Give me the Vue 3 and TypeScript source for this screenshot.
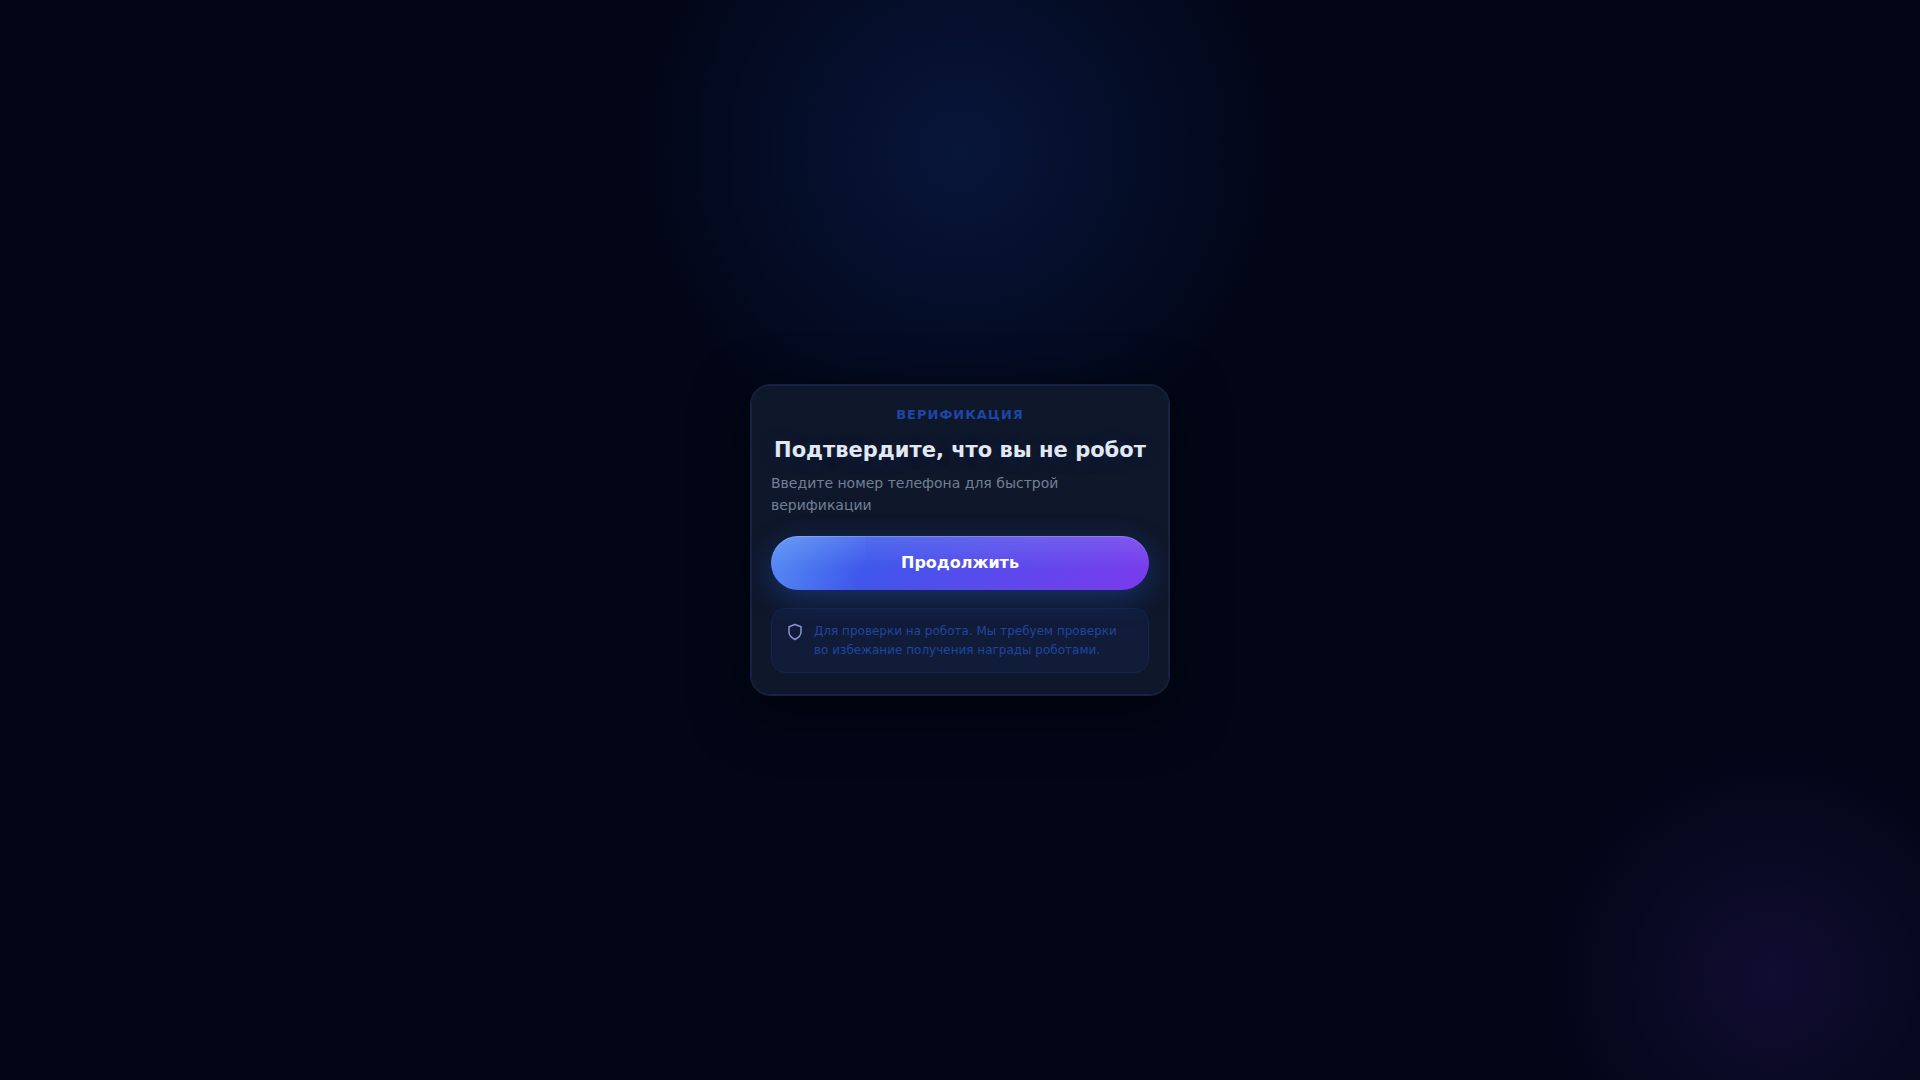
<script setup lang="ts">
const eyebrow = 'ВЕРИФИКАЦИЯ'
const title = 'Подтвердите, что вы не робот'
const subtitle = 'Введите номер телефона для быстрой верификации'
const action = 'Продолжить'
const notice =
  'Для проверки на робота. Мы требуем проверки во избежание получения награды роботами.'
</script>

<template>
  <main class="page">
    <section class="card" aria-labelledby="verify-title">
      <p class="eyebrow">{{ eyebrow }}</p>
      <h1 id="verify-title" class="title">{{ title }}</h1>
      <p class="subtitle">{{ subtitle }}</p>
      <button type="button" class="action">{{ action }}</button>
      <div class="notice">
        <svg class="shield" viewBox="0 0 24 24" aria-hidden="true">
          <path d="M12 22s8-4 8-10V5l-8-3-8 3v7c0 6 8 10 8 10z" />
        </svg>
        <p class="notice-text">{{ notice }}</p>
      </div>
    </section>
  </main>
</template>

<style>
body {
  margin: 0;
  background: #020617;
}
</style>

<style scoped>
.page {
  display: flex;
  align-items: center;
  justify-content: center;
  min-height: 100vh;
  box-sizing: border-box;
  padding: 16px;
  background:
    radial-gradient(circle at 50% 150px, rgba(37, 99, 235, 0.17), transparent 322px),
    radial-gradient(circle at calc(100% - 147px) calc(100% - 102px), rgba(124, 58, 237, 0.12), transparent 230px),
    #020617;
  font-family: "DejaVu Sans", sans-serif;
}

.card {
  box-sizing: border-box;
  width: 100%;
  max-width: 420px;
  padding: 21px 20px 22px;
  border: 1px solid #14213f;
  border-radius: 20px;
  background: #0f172a;
  box-shadow:
    0 16px 56px rgba(0, 0, 0, 0.6),
    inset 0 0 0 1px rgba(59, 130, 246, 0.12);
}

.eyebrow {
  margin: 0 0 12px;
  color: #1e45a8;
  font-size: 13px;
  font-weight: 700;
  line-height: 18px;
  letter-spacing: 1px;
  text-align: center;
}

.title {
  margin: 0 0 8px;
  color: #e2e8f0;
  font-size: 21px;
  font-weight: 700;
  line-height: 28px;
  text-align: center;
  text-shadow: 0 2px 20px rgba(30, 64, 175, 0.2);
}

.subtitle {
  margin: 0 0 20px;
  color: #718096;
  font-size: 14px;
  line-height: 22px;
}

.action {
  display: block;
  width: 100%;
  height: 54px;
  margin: 0 0 18px;
  border: 0;
  border-radius: 27px;
  background:
    linear-gradient(180deg, rgba(255, 255, 255, 0.12), transparent 60%),
    linear-gradient(112deg, rgba(147, 197, 253, 0.45), transparent 92%) left / 25% 100% no-repeat,
    linear-gradient(135deg, #2563eb, #7c3aed);
  box-shadow:
    0 8px 28px rgba(37, 99, 235, 0.35),
    inset 0 1px 0 rgba(255, 255, 255, 0.2);
  color: #ffffff;
  font: 700 16px/20px "DejaVu Sans", sans-serif;
  cursor: pointer;
}

.notice {
  display: flex;
  gap: 10px;
  align-items: flex-start;
  padding: 13px 14px 12px;
  border: 1px solid #12244f;
  border-radius: 14px;
  background: rgba(30, 64, 175, 0.12);
}

.shield {
  flex: none;
  width: 18px;
  height: 18px;
  margin-top: 1px;
  fill: none;
  stroke: #8791d8;
  stroke-width: 2;
  stroke-linejoin: round;
}

.notice-text {
  margin: 0;
  color: #1e45a0;
  font-size: 12px;
  line-height: 19px;
}
</style>
